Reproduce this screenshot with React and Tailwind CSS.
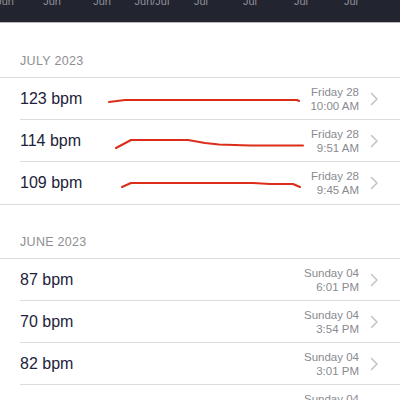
import React from "react";

const Chevron = () => (
  <svg width="9" height="14" viewBox="0 0 9 14" className="shrink-0">
    <path d="M1.5 1.5 L7 7 L1.5 12.5" fill="none" stroke="#c4c4c9" strokeWidth="1.6" strokeLinecap="round" strokeLinejoin="round" />
  </svg>
);

const Spark = ({ d }) => (
  <svg width="200" height="20" viewBox="0 0 200 20" className="absolute left-[105px] top-1/2 -translate-y-1/2">
    <path d={d} fill="none" stroke="#dd2c1a" strokeWidth="2" strokeLinecap="round" strokeLinejoin="round" />
  </svg>
);

const Row = ({ bpm, day, time, spark, last }) => (
  <div className="relative h-[42px] flex items-center pl-5">
    <div className={`flex-1 h-full flex items-center pr-[21px] ${last ? "" : "border-b border-[#dcdce0]"}`}>
      <span className="text-[16px] text-[#22233a] flex-1">{bpm}</span>
      <div className="flex flex-col items-end text-[11.5px] leading-[14px] text-[#8a8a90] mr-[11px]">
        <span>{day}</span>
        <span>{time}</span>
      </div>
      <Chevron />
    </div>
    {spark && <Spark d={spark} />}
  </div>
);

const Section = ({ title, rows }) => (
  <div>
    <div className="h-[35px] flex items-end pl-5 pb-[6px] text-[12.5px] text-[#8e8e93] tracking-[0.3px]">{title}</div>
    <div className="border-t border-b border-[#dcdce0] bg-white">
      {rows.map((r, i) => (
        <Row key={i} {...r} last={i === rows.length - 1} />
      ))}
    </div>
  </div>
);

export default function App() {
  const labels = [
    ["Jun", 5],
    ["Jun", 52],
    ["Jun", 102],
    ["Jun/Jul", 152],
    ["Jul", 201],
    ["Jul", 250],
    ["Jul", 301],
    ["Jul", 351],
  ];
  return (
    <div className="w-[400px] h-[400px] overflow-hidden bg-white" style={{ fontFamily: '"Liberation Sans", Arial, sans-serif' }}>
      <div className="relative h-[23px] bg-[#22242f] border-b border-[#b8b8bc]">
        {labels.map(([t, x], i) => (
          <span key={i} className="absolute top-[-7px] text-[11px] text-[#8f909a] -translate-x-1/2" style={{ left: x }}>
            {t}
          </span>
        ))}
      </div>
      <div className="h-[19px]" />
      <Section
        title="JULY 2023"
        rows={[
          { bpm: "123 bpm", day: "Friday 28", time: "10:00 AM", spark: "M4 13 L20 11 L192 11 L194 12" },
          { bpm: "114 bpm", day: "Friday 28", time: "9:51 AM", spark: "M11 17 L26 9 L83 9 L100 12 L114 13.5 L145 14.5 L198 14.5" },
          { bpm: "109 bpm", day: "Friday 28", time: "9:45 AM", spark: "M17 14 L26 10 L148 10 L165 11 L188 11 L195 14" },
        ]}
      />
      <div className="h-[18px]" />
      <Section
        title="JUNE 2023"
        rows={[
          { bpm: "87 bpm", day: "Sunday 04", time: "6:01 PM" },
          { bpm: "70 bpm", day: "Sunday 04", time: "3:54 PM" },
          { bpm: "82 bpm", day: "Sunday 04", time: "3:01 PM" },
          { bpm: "", day: "Sunday 04", time: "2:40 PM" },
        ]}
      />
    </div>
  );
}
